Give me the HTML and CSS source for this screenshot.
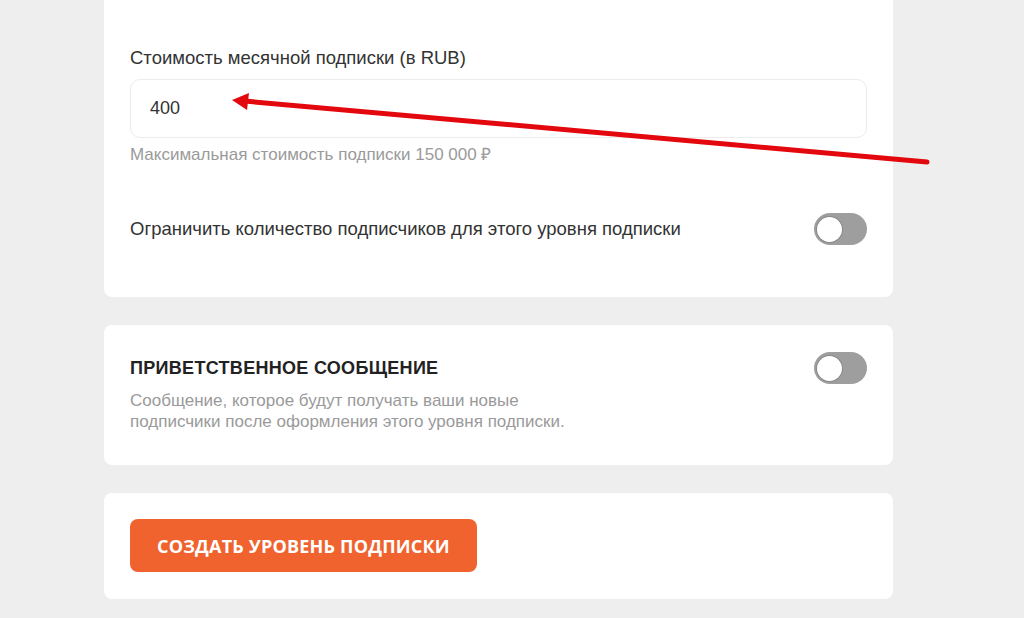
FILE: index.html
```html
<!DOCTYPE html>
<html lang="ru">
<head>
    <meta charset="UTF-8">
    <meta name="viewport" content="width=device-width, initial-scale=1.0">
    <title>Создание уровня подписки</title>
    <link rel="stylesheet" href="styles.css">
</head>
<body>
    <div class="page">
        <div class="card card-price">
            <div class="field">
                <label class="field-label" for="price">Стоимость месячной подписки (в RUB)</label>
                <input class="field-input" id="price" type="text" value="400">
                <div class="field-hint">Максимальная стоимость подписки 150 000 ₽</div>
            </div>

            <div class="toggle-row">
                <span class="toggle-text">Ограничить количество подписчиков для этого уровня подписки</span>
                <span class="toggle"><span class="toggle-knob"></span></span>
            </div>
        </div>

        <div class="card card-welcome">
            <div class="welcome-head">
                <h3 class="section-title">Приветственное сообщение</h3>
                <span class="toggle"><span class="toggle-knob"></span></span>
            </div>
            <p class="section-desc">Сообщение, которое будут получать ваши новые подписчики после оформления этого уровня подписки.</p>
        </div>

        <div class="card card-submit">
            <button class="submit-button">Создать уровень подписки</button>
        </div>
    </div>

    <!-- annotation arrow drawn over the screenshot -->
    <svg class="arrow" width="1024" height="618" viewBox="0 0 1024 618">
        <line x1="927" y1="162" x2="244" y2="101" stroke="#e3080d" stroke-width="5" stroke-linecap="round"/>
        <polygon points="232,100 249,93 247,110" fill="#e3080d"/>
    </svg>
</body>
</html>
```

FILE: styles.css
```css
* {
    margin: 0;
    padding: 0;
    box-sizing: border-box;
}

body {
    font-family: "Liberation Sans", Arial, sans-serif;
    background: #eeeeee;
    color: #2b2b2b;
    width: 1024px;
    height: 618px;
    overflow: hidden;
    position: relative;
}

.page {
    width: 789px;
    margin-left: 104px;
    margin-top: -20px;
    display: flex;
    flex-direction: column;
    gap: 28px;
}

.card {
    background: #ffffff;
    border-radius: 8px;
    padding: 0 26px;
}

.card-price {
    padding-top: 67px;
    padding-bottom: 52px;
}

.field-label {
    display: block;
    font-size: 18.5px;
    line-height: 22px;
    color: #333;
    margin-bottom: 10px;
}

.field-input {
    display: block;
    width: 100%;
    height: 59px;
    border: 1px solid #ececec;
    border-radius: 10px;
    padding: 0 19px;
    font-family: inherit;
    font-size: 18px;
    color: #333;
    background: #fff;
    outline: none;
}

.field-hint {
    margin-top: 7px;
    font-size: 17px;
    line-height: 20px;
    color: #9a9a9a;
}

.toggle-row {
    margin-top: 48px;
    display: flex;
    align-items: center;
    justify-content: space-between;
}

.toggle-text {
    font-size: 18.5px;
    color: #333;
}

.toggle {
    width: 53px;
    height: 32px;
    border-radius: 16px;
    background: #9e9e9e;
    display: flex;
    align-items: center;
    padding: 0 3px;
    flex-shrink: 0;
}

.toggle-knob {
    width: 25px;
    height: 25px;
    border-radius: 50%;
    background: #fff;
    box-shadow: 0 0 0 1px #8a8a8a;
}

.card-welcome {
    padding-top: 27px;
    padding-bottom: 33px;
}

.welcome-head {
    display: flex;
    align-items: center;
    justify-content: space-between;
}

.section-title {
    font-size: 18px;
    font-weight: 700;
    text-transform: uppercase;
    color: #222;
    letter-spacing: 0.3px;
}

.section-desc {
    margin-top: 6px;
    max-width: 470px;
    font-size: 17px;
    line-height: 21px;
    color: #9a9a9a;
}

.card-submit {
    padding-top: 26px;
    padding-bottom: 27px;
}

.submit-button {
    display: block;
    height: 53px;
    padding: 0 27px;
    border: none;
    border-radius: 8px;
    background: #f0632f;
    color: #fff;
    font-family: "Open Sans", "Liberation Sans", sans-serif;
    font-size: 18px;
    font-weight: 700;
    text-transform: uppercase;
    letter-spacing: 0.2px;
    cursor: pointer;
}

.arrow {
    position: absolute;
    top: 0;
    left: 0;
    pointer-events: none;
}
```
